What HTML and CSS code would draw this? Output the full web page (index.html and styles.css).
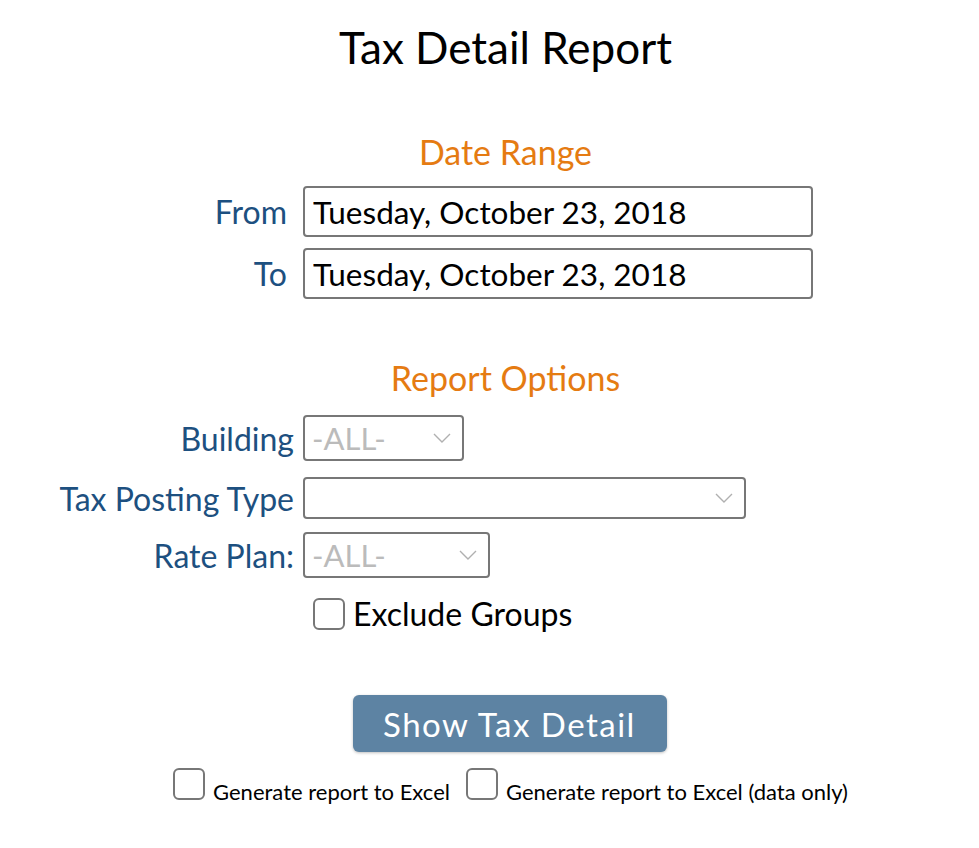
FILE: index.html
```html
<!DOCTYPE html>
<html lang="en">
<head>
    <meta charset="UTF-8">
    <title>Tax Detail Report</title>
    <link rel="stylesheet" href="styles.css">
</head>
<body>
    <div class="report">
        <h1>Tax Detail Report</h1>

        <h2>Date Range</h2>
        <div class="date-row">
            <label for="from">From</label>
            <input type="text" id="from" value="Tuesday, October 23, 2018">
        </div>
        <div class="date-row">
            <label for="to">To</label>
            <input type="text" id="to" value="Tuesday, October 23, 2018">
        </div>

        <h2 class="options-title">Report Options</h2>
        <div class="option-row">
            <label>Building</label>
            <div class="select select-building">
                <span>-ALL-</span>
                <svg width="18" height="10" viewBox="0 0 18 10"><polyline points="1,1 9,9 17,1" fill="none" stroke="#b0b0b0" stroke-width="1.4"/></svg>
            </div>
        </div>
        <div class="option-row row-type">
            <label>Tax Posting Type</label>
            <div class="select select-type">
                <span></span>
                <svg width="18" height="10" viewBox="0 0 18 10"><polyline points="1,1 9,9 17,1" fill="none" stroke="#b0b0b0" stroke-width="1.4"/></svg>
            </div>
        </div>
        <div class="option-row">
            <label>Rate Plan:</label>
            <div class="select select-plan">
                <span>-ALL-</span>
                <svg width="18" height="10" viewBox="0 0 18 10"><polyline points="1,1 9,9 17,1" fill="none" stroke="#b0b0b0" stroke-width="1.4"/></svg>
            </div>
        </div>
        <div class="check-row">
            <span class="box"></span>
            <span>Exclude Groups</span>
        </div>

        <div class="actions">
            <button type="button">Show Tax Detail</button>
        </div>

        <div class="excel">
            <span class="box"></span>
            <span class="excel-text">Generate report to Excel</span>
            <span class="box"></span>
            <span class="excel-text">Generate report to Excel (data only)</span>
        </div>
    </div>
</body>
</html>
```

FILE: styles.css
```css
body {
    margin: 0;
    font-family: Lato, "Open Sans", sans-serif;
    color: #000;
    background: #fff;
}
.report {
    padding-left: 32px;
    padding-top: 22px;
}
h1 {
    margin: 0;
    text-align: center;
    font-size: 44px;
    font-weight: 400;
    line-height: 50px;
}
h2 {
    margin: 60px 0 14px;
    text-align: center;
    font-size: 34px;
    font-weight: 400;
    line-height: 40px;
    color: #e57b12;
}
.options-title {
    margin-top: 59px;
    margin-bottom: 17px;
}
label {
    text-align: right;
    color: #1d5080;
    font-size: 32px;
    white-space: nowrap;
}
.date-row {
    display: flex;
    align-items: center;
    gap: 16px;
    margin-bottom: 11px;
}
.date-row label {
    width: 255px;
}
input {
    box-sizing: border-box;
    width: 510px;
    height: 51px;
    font-family: inherit;
    font-size: 31.5px;
    padding: 0 8px;
    border: 2px solid #777;
    border-radius: 4px;
    color: #000;
}
.option-row {
    display: flex;
    align-items: center;
    gap: 9px;
    margin-bottom: 16px;
}
.option-row.row-type {
    margin-bottom: 13px;
}
.option-row label {
    width: 262px;
}
.select {
    box-sizing: border-box;
    display: flex;
    align-items: center;
    justify-content: space-between;
    border: 2px solid #777;
    border-radius: 4px;
    padding: 0 11px 0 7px;
    font-size: 31px;
    color: #bbb;
}
.select-building {
    width: 161px;
    height: 46px;
}
.select-type {
    width: 443px;
    height: 42px;
}
.select-plan {
    width: 187px;
    height: 46px;
}
.check-row {
    display: flex;
    align-items: center;
    gap: 8px;
    margin: 0 0 0 281px;
    font-size: 32px;
}
.box {
    box-sizing: border-box;
    width: 32px;
    height: 32px;
    border: 2px solid #777;
    border-radius: 6px;
    background: #fff;
}
.actions {
    text-align: center;
    margin-top: 62px;
    padding-left: 8px;
}
button {
    width: 314px;
    height: 57px;
    background-color: #5d83a3;
    color: #fff;
    border: none;
    border-radius: 6px;
    font-family: inherit;
    font-size: 33px;
    letter-spacing: 1.5px;
    box-shadow: 0 1px 3px rgba(0, 0, 0, 0.25);
}
.excel {
    display: flex;
    justify-content: center;
    align-items: baseline;
    margin-top: 16px;
    padding-left: 10px;
}
.excel .box {
    margin-right: 8px;
}
.excel-text {
    font-size: 22px;
    margin-right: 16px;
}
.excel-text:last-child {
    margin-right: 0;
}
```
